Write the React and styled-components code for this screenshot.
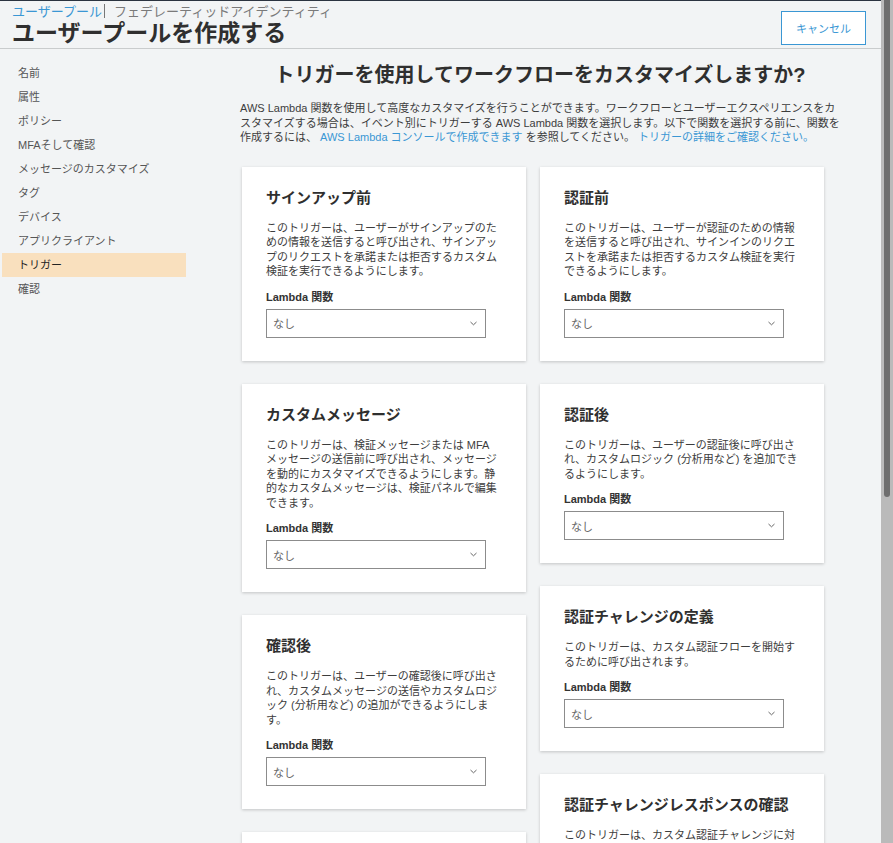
import React from 'react';
import styled, { createGlobalStyle } from 'styled-components';

const GlobalStyle = createGlobalStyle`
  html, body {
    margin: 0;
    padding: 0;
    height: 843px;
    overflow: hidden;
    background: #f2f4f5;
  }
  body {
    font-family: "Liberation Sans", "Noto Sans CJK JP", sans-serif;
    color: #444;
  }
  * { box-sizing: border-box; }
`;

const Page = styled.div`
  display: flex;
  width: 893px;
  height: 843px;
  overflow: hidden;
`;

const Main = styled.div`
  width: 881px;
  flex-shrink: 0;
  border-top: 1px solid #2b3440;
`;

const ScrollTrack = styled.div`
  width: 12px;
  height: 843px;
  background: #bababa;
  padding-left: 3px;
`;

const ScrollThumb = styled.div`
  width: 6px;
  height: 497px;
  background: #6e6e6e;
  border-radius: 0 0 3px 3px;
`;

const Header = styled.header`
  display: flex;
  justify-content: space-between;
  align-items: flex-start;
  height: 48px;
  padding: 3px 15px 0 12px;
  border-bottom: 1px solid #c9cccd;
`;

const Crumbs = styled.div`
  font-size: 13px;
  line-height: 16px;
  color: #7a7a7a;
`;

const CrumbLink = styled.a`
  color: #3a97d4;
  text-decoration: none;
`;

const CrumbSep = styled.span`
  display: inline-block;
  width: 1px;
  height: 14px;
  background: #777;
  margin: 0 9px 0 2px;
  vertical-align: -2px;
`;

const Title = styled.h1`
  margin: 0;
  font-size: 23px;
  line-height: 26px;
  font-weight: 700;
  color: #2f2f2f;
`;

const CancelButton = styled.button`
  margin-top: 7px;
  width: 85px;
  height: 34px;
  background: #fff;
  border: 1px solid #3a97d4;
  color: #3a97d4;
  font-family: inherit;
  font-size: 11px;
  cursor: pointer;
`;

const Body = styled.div`
  display: flex;
  align-items: flex-start;
`;

const Sidebar = styled.nav`
  width: 184px;
  margin-left: 2px;
  padding-top: 12px;
  display: flex;
  flex-direction: column;
`;

const NavItem = styled.div`
  height: 24px;
  line-height: 24px;
  padding-left: 16px;
  font-size: 11px;
  color: ${p => (p.$active ? '#222' : '#555')};
  background: ${p => (p.$active ? '#f9e0be' : 'transparent')};
`;

const Content = styled.main`
  width: 600px;
  margin-left: 54px;
  padding-top: 13px;
`;

const Heading = styled.h2`
  margin: 0;
  text-align: center;
  font-size: 20px;
  line-height: 26px;
  font-weight: 700;
  color: #2f2f2f;
`;

const Intro = styled.p`
  margin: 13px 0 0;
  font-size: 11px;
  line-height: 14.5px;
  color: #3d3d3d;
`;

const Link = styled.a`
  color: #3a97d4;
  text-decoration: none;
`;

const Columns = styled.div`
  display: flex;
  align-items: flex-start;
  gap: 14px;
  padding-left: 2px;
  margin-top: 22px;
`;

const Column = styled.div`
  display: flex;
  flex-direction: column;
  gap: 23px;
  width: 284px;
`;

const Card = styled.section`
  background: #fff;
  padding: 21px 24px 23px;
  box-shadow: 0 1px 3px rgba(0, 0, 0, 0.2);
`;

const CardTitle = styled.h3`
  margin: 0;
  font-size: 15px;
  line-height: 20px;
  font-weight: 700;
  color: #2f2f2f;
`;

const CardText = styled.p`
  margin: 13px 0 0;
  font-size: 11px;
  line-height: 14.5px;
  color: #3d3d3d;
`;

const FieldLabel = styled.div`
  margin-top: 10px;
  font-size: 11px;
  line-height: 16px;
  font-weight: 700;
  color: #333;
`;

const Select = styled.div`
  margin-top: 4px;
  width: 220px;
  height: 29px;
  border: 1px solid #8c8c8c;
  display: flex;
  align-items: center;
  justify-content: space-between;
  padding: 0 8px 0 6px;
  font-size: 11px;
  color: #666;
`;

const Chevron = () => (
  <svg width="7" height="5" viewBox="0 0 7 5">
    <polyline points="0.5,1 3.5,3.8 6.5,1" fill="none" stroke="#666" strokeWidth="1" />
  </svg>
);

const navItems = [
  '名前',
  '属性',
  'ポリシー',
  'MFAそして確認',
  'メッセージのカスタマイズ',
  'タグ',
  'デバイス',
  'アプリクライアント',
  'トリガー',
  '確認',
];

const leftCards = [
  {
    title: 'サインアップ前',
    text: 'このトリガーは、ユーザーがサインアップのための情報を送信すると呼び出され、サインアップのリクエストを承諾または拒否するカスタム検証を実行できるようにします。',
  },
  {
    title: 'カスタムメッセージ',
    text: 'このトリガーは、検証メッセージまたは MFA メッセージの送信前に呼び出され、メッセージを動的にカスタマイズできるようにします。静的なカスタムメッセージは、検証パネルで編集できます。',
  },
  {
    title: '確認後',
    text: 'このトリガーは、ユーザーの確認後に呼び出され、カスタムメッセージの送信やカスタムロジック (分析用など) の追加ができるようにします。',
  },
  {
    title: '認証チャレンジの作成',
    text: 'このトリガーは、ユーザーに対して提示するカスタム認証チャレンジを作成するために呼び出されます。',
  },
];

const rightCards = [
  {
    title: '認証前',
    text: 'このトリガーは、ユーザーが認証のための情報を送信すると呼び出され、サインインのリクエストを承諾または拒否するカスタム検証を実行できるようにします。',
  },
  {
    title: '認証後',
    text: 'このトリガーは、ユーザーの認証後に呼び出され、カスタムロジック (分析用など) を追加できるようにします。',
  },
  {
    title: '認証チャレンジの定義',
    text: 'このトリガーは、カスタム認証フローを開始するために呼び出されます。',
  },
  {
    title: '認証チャレンジレスポンスの確認',
    text: 'このトリガーは、カスタム認証チャレンジに対するユーザーのレスポンスが正しいかどうかを確認するために呼び出されます。',
  },
];

function TriggerCard({ title, text }) {
  return (
    <Card>
      <CardTitle>{title}</CardTitle>
      <CardText>{text}</CardText>
      <FieldLabel>Lambda 関数</FieldLabel>
      <Select>
        <span>なし</span>
        <Chevron />
      </Select>
    </Card>
  );
}

export default function App() {
  return (
    <Page>
      <GlobalStyle />
      <Main>
        <Header>
          <div>
            <Crumbs>
              <CrumbLink>ユーザープール</CrumbLink>
              <CrumbSep />
              フェデレーティッドアイデンティティ
            </Crumbs>
            <Title>ユーザープールを作成する</Title>
          </div>
          <CancelButton>キャンセル</CancelButton>
        </Header>
        <Body>
          <Sidebar>
            {navItems.map(item => (
              <NavItem key={item} $active={item === 'トリガー'}>
                {item}
              </NavItem>
            ))}
          </Sidebar>
          <Content>
            <Heading>トリガーを使用してワークフローをカスタマイズしますか?</Heading>
            <Intro>
              AWS Lambda 関数を使用して高度なカスタマイズを行うことができます。ワークフローとユーザーエクスペリエンスをカスタマイズする場合は、イベント別にトリガーする AWS Lambda 関数を選択します。以下で関数を選択する前に、関数を作成するには、 <Link>AWS Lambda コンソールで作成できます</Link> を参照してください。 <Link>トリガーの詳細をご確認ください。</Link>
            </Intro>
            <Columns>
              <Column>
                {leftCards.map(c => (
                  <TriggerCard key={c.title} {...c} />
                ))}
              </Column>
              <Column>
                {rightCards.map(c => (
                  <TriggerCard key={c.title} {...c} />
                ))}
              </Column>
            </Columns>
          </Content>
        </Body>
      </Main>
      <ScrollTrack>
        <ScrollThumb />
      </ScrollTrack>
    </Page>
  );
}
